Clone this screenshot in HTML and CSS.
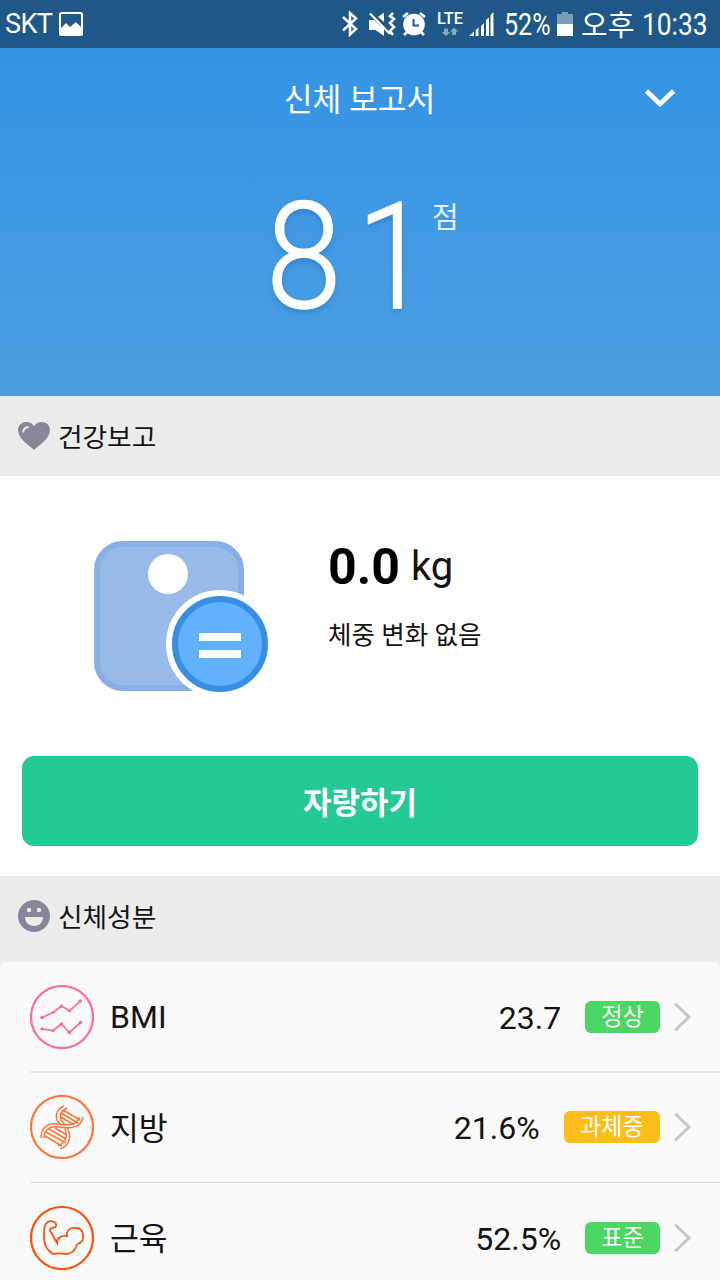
FILE: index.html
```html
<!DOCTYPE html>
<html lang="ko">
<head>
<meta charset="utf-8">
<title>신체 보고서</title>
<link rel="stylesheet" href="styles.css">
</head>
<body>
<div class="status">
  <span class="carrier">SKT</span>
  <svg class="picture" width="24" height="24" viewBox="0 0 24 24"><rect x="1" y="1" width="22" height="22" rx="1.5" fill="none" stroke="#fff" stroke-width="2"/><path d="M2 16L7 11L11 15L17 10L22 15V22H2Z" fill="#fff"/></svg>
  <svg class="indicators" width="156" height="48" viewBox="0 0 156 48">
    <path d="M3 17L16 29L10 34.500V13L16 18.500L3 30.500" fill="none" stroke="#fff" stroke-width="2.500"/>
    <g fill="#fff"><path d="M29 20H34L44 29V36L35.500 30H29Z M38 17L44 12.500V22Z"/></g>
    <path d="M30 13.500L50 34" stroke="#fff" stroke-width="2.200"/>
    <path d="M53 13L50 16L54 19L50 23L54 27L50 31L53 35" fill="none" stroke="#fff" stroke-width="2.500"/>
    <circle cx="74" cy="24.500" r="10.800" fill="#fff"/><path d="M63 17L68 13M80 13L85 17M67 32L64 35M81 32L84 35" stroke="#fff" stroke-width="2.800"/><path d="M73.500 19V25.500H79" fill="none" stroke="#1f5888" stroke-width="2"/>
    <text x="97" y="24.200" class="lte" textLength="26" lengthAdjust="spacingAndGlyphs">LTE</text>
    <path d="M104 28.500H108V32H110.500L106 36L101.500 32H104Z M112 35V31.500H109.800L114 27.500L118.400 31.500H116V35Z" fill="#86a7c2"/>
    <path d="M129 36L134 31.500V36Z M135.700 30L138.500 27.500V36H135.700Z M141 26L144 23V36H141Z M146 20L149 17.500V36H146Z M150.500 15L153.500 12V36H150.500Z" fill="#fff"/>
  </svg>
  <span class="percent"><span class="narrow">52%</span></span>
  <svg class="battery" width="16" height="24" viewBox="0 0 16 24"><path d="M5 0H11V2H16V12H0V2H5Z" fill="#7b9cba"/><path d="M0 12H16V24H0Z" fill="#fff"/></svg>
  <span class="period">오후</span>
  <span class="clock"><span class="narrow clock-text">10:33</span></span>
</div>
<header class="hero">
  <div class="titlebar">
    <h1 class="title">신체 보고서</h1>
    <svg class="expand" width="32" height="22" viewBox="0 0 32 22"><path d="M2.500 4L16 17L29.500 4" fill="none" stroke="#fff" stroke-width="4.600"/></svg>
  </div>
  <div class="score"><span class="digit eight">8</span><span class="digit one">1</span><span class="unit">점</span></div>
</header>
<h2 class="section">
  <svg width="32" height="32" viewBox="0 0 32 32"><path d="M16 30C12 26 0 19 0 10C0 5 4 2 8 2C12 2 15 4 16 6.500C17 4 20 2 24 2C28 2 32 5 32 10C32 19 20 26 16 30Z" fill="#888799"/><path d="M5.200 12.500C5 9.500 7 7.200 10.500 7" fill="none" stroke="#ececec" stroke-width="2"/></svg>
  <span class="section-label">건강보고</span>
</h2>
<main class="report">
  <div class="summary">
    <svg width="176" height="153" viewBox="0 0 176 153">
      <rect x="3" y="3" width="144" height="144" rx="26" fill="#99bbea" stroke="#86afe6" stroke-width="6"/>
      <circle cx="74" cy="33" r="20" fill="#fff"/>
      <circle cx="126" cy="103" r="54" fill="#fff"/>
      <circle cx="126" cy="103" r="45" fill="#62b1ff" stroke="#388fe1" stroke-width="6"/>
      <path d="M105 92H147V100H105ZM105 109H147V117H105Z" fill="#fff"/>
    </svg>
    <div class="weight">
      <div class="measure"><b class="kilos">0.0</b><span class="kg">kg</span></div>
      <div class="change">체중 변화 없음</div>
    </div>
  </div>
  <button class="share">자랑하기</button>
</main>
<div class="composition">
  <h2 class="section body-section">
    <svg width="32" height="32" viewBox="0 0 32 32"><circle cx="16" cy="16" r="16" fill="#888799"/><circle cx="11" cy="10" r="2.200" fill="#ececec"/><circle cx="21" cy="10" r="2.200" fill="#ececec"/><path d="M7 17H25C25 29 7 29 7 17Z" fill="#ececec"/></svg>
    <span class="section-label">신체성분</span>
  </h2>
  <div class="list">
    <div class="row first">
      <svg class="icon" width="64" height="64" viewBox="0 0 64 64" fill="none" stroke="#ff6d94" stroke-width="1.700"><circle cx="32" cy="32" r="31" stroke-width="2.200"/><path d="M12 32.500L23 27.500L31.500 21L39.500 26L50.500 16M12 44L23 45.500L31.500 39L39.500 47.500L50.500 37.500"/><g fill="#ff6d94" stroke="none"><circle cx="12" cy="32.500" r="1.700"/><circle cx="23" cy="27.500" r="1.500"/><circle cx="31.500" cy="21" r="1.700"/><circle cx="39.500" cy="26" r="1.500"/><circle cx="50.500" cy="16" r="1.700"/><circle cx="12" cy="44" r="1.700"/><circle cx="23" cy="45.500" r="1.500"/><circle cx="31.500" cy="39" r="1.700"/><circle cx="39.500" cy="47.500" r="1.700"/><circle cx="50.500" cy="37.500" r="1.700"/></g></svg>
      <span class="name">BMI</span><span class="value">23.7</span><span class="badge good">정상</span>
      <svg class="chevron" width="17" height="30" viewBox="0 0 17 30"><path d="M2 2.500L15 15L2 27.500"/></svg>
    </div>
    <div class="row second">
      <svg class="icon" width="64" height="64" viewBox="0 0 64 64" fill="none" stroke="#ff7738" stroke-width="1.500"><circle cx="32" cy="32" r="31" stroke-width="2.200"/><path d="M11 43C11 33 17 28 27 29C39 31 47 30 49.500 22M14 43C14 35 19 31 28 32C41 34 51 33 53 22M34 11C27 14 25 20 27 25L30 29M37 13C31 16 29 20 31 25L35 30M34 32C38 39 37 47 28 51M37 32C42 42 40 50 30 54M33 15L50 25M31 18L48 28M31 22L44 30M19 34L36 44M16 37L36 48M15 41L32 51M25 33L37 40"/></svg>
      <span class="name hangul">지방</span><span class="value">21.6%</span><span class="badge warn">과체중</span>
      <svg class="chevron" width="17" height="30" viewBox="0 0 17 30"><path d="M2 2.500L15 15L2 27.500"/></svg>
    </div>
    <div class="row third">
      <svg class="icon" width="64" height="64" viewBox="0 0 64 64" fill="none" stroke="#fa5310" stroke-width="1.800"><circle cx="32" cy="32" r="31" stroke-width="2.200"/><path d="M23 48C18 45 14 39 14 31C14 24 14 18 18 16C22 14 27 16 26 20C25 23 20 21 20 24C20 26 23 28 24 32L27 37C27 32 31 29 37 30C36 24 41 21 46 22C52 22 54 28 53 33C52 37 47 38 47 39C45 44 42 48 36 48C31 47 27 47 23 48Z"/></svg>
      <span class="name hangul">근육</span><span class="value">52.5%</span><span class="badge good">표준</span>
      <svg class="chevron" width="17" height="30" viewBox="0 0 17 30"><path d="M2 2.500L15 15L2 27.500"/></svg>
    </div>
  </div>
</div>
</body>
</html>
```
FILE: styles.css
```css
* { box-sizing: border-box; }
body { margin: 0; width: 720px; height: 1280px; overflow: hidden; background: #fff; color: #141414; font-family: Roboto, "Noto Sans CJK KR", sans-serif; }
svg { display: block; flex: none; }
h1, h2 { margin: 0; font-weight: 400; }
.status { height: 48px; display: flex; align-items: center; background: #1f5888; color: #fff; padding: 0 0 0 5px; white-space: nowrap; }
.carrier { width: 54px; font-size: 27px; letter-spacing: -.6px; }
.indicators { margin-left: 257px; }
.lte { font: 500 16px Roboto, sans-serif; fill: #fff; }
.percent { width: 53px; margin-left: 8px; font-size: 31px; line-height: 48px; padding-top: 2px; }
.narrow { display: inline-block; transform: scaleX(.81); transform-origin: left center; }
.battery { margin-left: 0; }
.period { margin-left: 8px; width: 61px; font-size: 29px; line-height: 48px; padding-top: 4px; }
.clock { width: 70px; font-size: 31px; line-height: 48px; padding-top: 2px; }
.clock-text { transform: scaleX(.85); }
.hero { height: 348px; background: linear-gradient(#3593e6, #4b9fe0); color: #fff; }
.titlebar { height: 100px; display: grid; grid-template-columns: 76px 1fr 76px; align-items: center; }
.title { grid-column: 2; text-align: center; font-size: 31.300px; line-height: 48px; padding: 5px 1px 0 0; }
.score { height: 170px; display: flex; align-items: flex-start; padding: 55px 0 0 266px; }
.digit { font-size: 148px; line-height: 110px; font-weight: 300; text-shadow: 0 4px 5px rgba(20, 85, 145, .3); -webkit-text-stroke: 1.500px #fff; transform-origin: left center; }
.eight { width: 91px; transform: scaleX(.92); }
.one { width: 75px; transform: scaleX(.88); }
.unit { font-size: 29px; line-height: 30px; color: #e0effc; }
.section { height: 80px; display: flex; align-items: center; gap: 8px; padding-left: 18px; background: #ececec; font-size: 26.700px; line-height: 40px; }
.section-label { padding-top: 4px; }
.report { height: 400px; padding: 65px 22px 30px; }
.summary { height: 215px; display: flex; padding-left: 72px; }
.weight { padding: 0 0 0 58px; }
.measure { display: flex; align-items: flex-start; gap: 11px; height: 70px; line-height: 52px; }
.kilos { font-size: 50px; color: #000; }
.kg { font-size: 40px; }
.change { font-size: 25.500px; line-height: 40px; margin-top: 4px; }
.share { display: block; width: 100%; height: 90px; border: 0; border-radius: 12px; background: #25c996; color: #fff; font: 700 31px/40px Roboto, "Noto Sans CJK KR", sans-serif; padding: 5px 0 0; }
.composition { background: #ececec; }
.body-section { height: 86px; padding-bottom: 6px; }
.list { background: #fafafa; border-radius: 5px 5px 0 0; }
.row { height: 111px; margin-left: 30px; display: flex; align-items: center; padding-right: 29px; font-size: 32px; line-height: 42px; border-bottom: 2px solid #e4e4e4; }
.second { height: 110px; border-bottom: 1px solid #d8d8d8; padding-bottom: 1px; }
.third { border: 0; padding-bottom: 2px; }
.name { margin-left: 16px; padding-top: 1px; }
.hangul { font-size: 31.300px; padding-top: 5px; }
.value { margin-left: auto; padding-top: 2px; }
.badge { height: 32px; margin-left: 24px; padding: 0 16px; border-radius: 6px; color: #fff; font-size: 23.300px; line-height: 33px; }
.good { background: #4cd664; }
.warn { background: #ffbd19; }
.chevron { margin-left: 14px; fill: none; stroke: #c7c7c7; stroke-width: 3; stroke-linecap: round; }
```
